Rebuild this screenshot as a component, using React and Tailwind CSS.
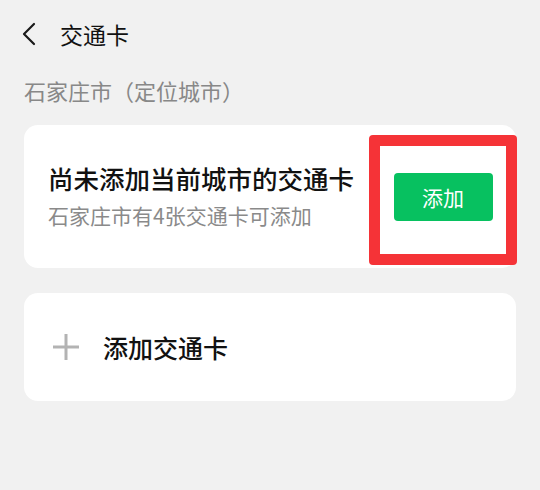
import React from "react";

const font = { fontFamily: '"Noto Sans CJK SC", "Noto Sans", sans-serif' };

const BackIcon = () => (
  <svg width="16" height="24" viewBox="0 0 16 24" fill="none">
    <path d="M13 2 L3 12 L13 22" stroke="#1a1a1a" strokeWidth="2.2" strokeLinecap="round" strokeLinejoin="round" />
  </svg>
);

const PlusIcon = () => (
  <svg width="26" height="26" viewBox="0 0 26 26">
    <rect x="0" y="11.5" width="26" height="3" fill="#b3b3b3" />
    <rect x="11.5" y="0" width="3" height="26" fill="#b3b3b3" />
  </svg>
);

export default function App() {
  return (
    <div
      className="w-[540px] h-[490px] bg-[#f1f1f1] flex flex-col font-['Noto_Sans_CJK_SC',sans-serif]"
      style={font}
    >
      {/* header */}
      <div className="h-[68px] flex items-center pl-[21px]">
        <BackIcon />
        <span className="ml-[23px] text-[23px] leading-none text-[#111]">交通卡</span>
      </div>

      {/* location label */}
      <div className="h-[47px] flex items-center pl-[24px] text-[22px] text-[#888] leading-none -mt-[2px]">
        石家庄市（定位城市）
      </div>

      {/* current city card */}
      <div className="mx-[24px] mt-[12px] h-[143px] bg-white rounded-[14px] flex items-center pl-[24px] relative">
        <div className="flex flex-col -mt-[2px]">
          <span className="text-[25.5px] leading-none text-[#111] font-medium">尚未添加当前城市的交通卡</span>
          <span className="mt-[15px] text-[21px] leading-none text-[#8a8a8a]">石家庄市有4张交通卡可添加</span>
        </div>
        <div className="absolute right-[-1px] top-[10px] w-[148px] h-[130px] border-[11px] border-[#f53337] rounded-[4px] flex items-center justify-center">
          <button className="mb-[6px] w-[99px] h-[48px] bg-[#07c160] rounded-[4px] text-white text-[21px] leading-none">
            添加
          </button>
        </div>
      </div>

      {/* add card */}
      <div className="mx-[24px] mt-[25px] h-[108px] bg-white rounded-[14px] flex items-center pl-[29px]">
        <PlusIcon />
        <span className="ml-[24px] text-[25px] leading-none text-[#111] font-medium">添加交通卡</span>
      </div>
    </div>
  );
}
